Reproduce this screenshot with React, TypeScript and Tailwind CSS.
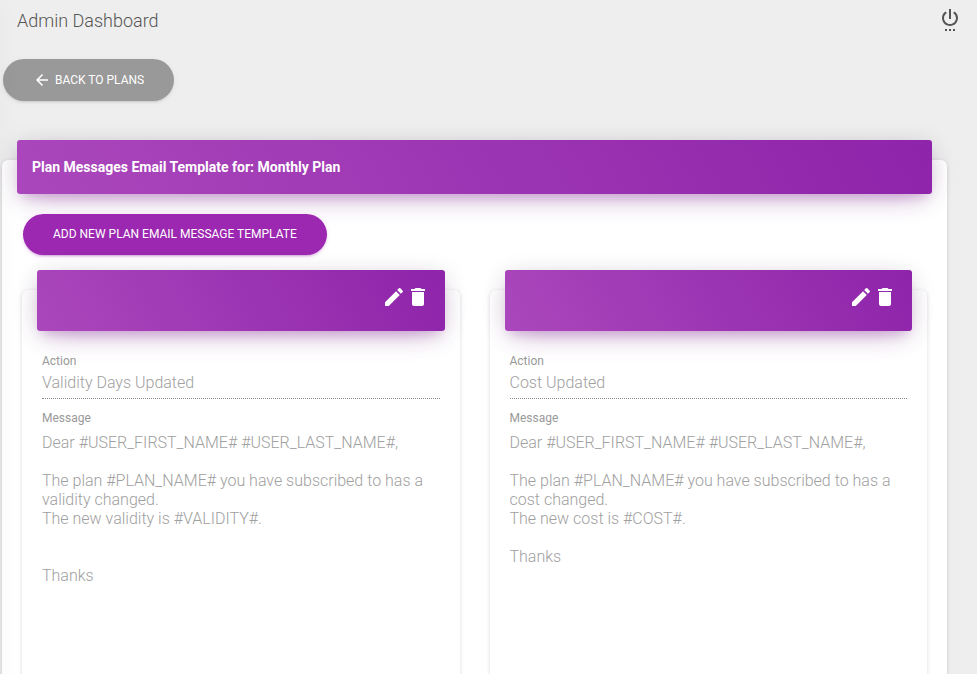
import { useId } from "react";
import { MdArrowBack, MdDelete, MdEdit, MdSettingsPower } from "react-icons/md";

interface Template {
  action: string;
  message: string;
}

const templates: Template[] = [
  {
    action: "Validity Days Updated",
    message:
      "Dear #USER_FIRST_NAME# #USER_LAST_NAME#,\n\nThe plan #PLAN_NAME# you have subscribed to has a validity changed.\nThe new validity is #VALIDITY#.\n\n\nThanks",
  },
  {
    action: "Cost Updated",
    message:
      "Dear #USER_FIRST_NAME# #USER_LAST_NAME#,\n\nThe plan #PLAN_NAME# you have subscribed to has a cost changed.\nThe new cost is #COST#.\n\nThanks",
  },
];

const headerStyle =
  "mx-[15px] -mt-5 rounded-[3px] bg-[linear-gradient(60deg,#ab47bc,#8e24aa)] p-[15px] text-white shadow-[0_10px_30px_-12px_rgba(156,39,176,0.42),0_4px_25px_0_rgba(0,0,0,0.12),0_8px_10px_-5px_rgba(156,39,176,0.2)]";

function TemplateCard({ action, message }: Template) {
  const id = useId();
  return (
    <article className="min-w-0 rounded-md bg-white shadow-[0_1px_4px_0_rgba(0,0,0,0.14)]">
      <header className={`${headerStyle} flex h-[61px] items-start justify-end`}>
        <button type="button" aria-label="Edit template">
          <MdEdit className="size-6" />
        </button>
        <button type="button" aria-label="Delete template">
          <MdDelete className="size-6" />
        </button>
      </header>
      <div className="flex flex-col p-5">
        <label htmlFor={`${id}-action`} className="text-xs leading-5 text-[#999]">
          Action
        </label>
        <input
          id={`${id}-action`}
          value={action}
          disabled
          className="h-7 w-full border-b border-dotted border-[#888] bg-transparent pb-1 text-base font-light text-[#a0a0a0]"
        />
        <label htmlFor={`${id}-message`} className="mt-2 text-xs leading-[22px] text-[#999]">
          Message
        </label>
        <textarea
          id={`${id}-message`}
          value={message}
          disabled
          rows={13}
          className="mt-1 block w-full resize-none overflow-hidden bg-transparent text-base leading-[19px] font-light text-[#a0a0a0]"
        />
      </div>
    </article>
  );
}

export default function App() {
  return (
    <div className="relative min-h-screen overflow-hidden bg-[#eee] font-[Roboto,sans-serif]">
      <nav className="flex h-[35px] items-end justify-between pr-[15px] pl-[17px]">
        <a href="#dashboard" className="text-lg font-light text-[#555]">
          Admin Dashboard
        </a>
        <button type="button" aria-label="Log out" className="pb-1 text-[#555]">
          <MdSettingsPower className="size-6" />
        </button>
      </nav>

      <main className="pt-6 pr-[30px] pb-[30px] pl-0.5">
        <a
          href="#plans"
          className="ml-px inline-flex h-[42px] items-center gap-1 rounded-full bg-[#999] px-[30px] text-xs text-white uppercase shadow-[0_2px_2px_0_rgba(153,153,153,0.14),0_3px_1px_-2px_rgba(153,153,153,0.2),0_1px_5px_0_rgba(153,153,153,0.12)]"
        >
          <MdArrowBack className="size-[18px]" />
          Back to Plans
        </a>

        <section className="mt-[59px] flow-root rounded-md bg-white pb-5 shadow-[0_1px_4px_0_rgba(0,0,0,0.14)]">
          <header className={headerStyle}>
            <h1 className="text-sm leading-6 font-bold">
              Plan Messages Email Template for: Monthly Plan
            </h1>
          </header>
          <div className="px-5 pt-5">
            <button
              type="button"
              className="ml-px flex h-[41px] items-start rounded-full bg-[#9c27b0] px-[30px] py-3 text-xs text-white uppercase shadow-[0_2px_2px_0_rgba(156,39,176,0.14),0_3px_1px_-2px_rgba(156,39,176,0.2),0_1px_5px_0_rgba(156,39,176,0.12)]"
            >
              Add New Plan Email Message Template
            </button>
            <div className="mt-[35px] grid grid-cols-2 gap-[30px]">
              {templates.map((template) => (
                <TemplateCard key={template.action} {...template} />
              ))}
            </div>
          </div>
        </section>
      </main>

      {/* Edge of the collapsed sidebar, casting its shadow over the page */}
      <div
        aria-hidden="true"
        className="pointer-events-none absolute inset-y-0 right-full w-64 shadow-[0_4px_25px_0_rgba(0,0,0,0.03)]"
      />
    </div>
  );
}
